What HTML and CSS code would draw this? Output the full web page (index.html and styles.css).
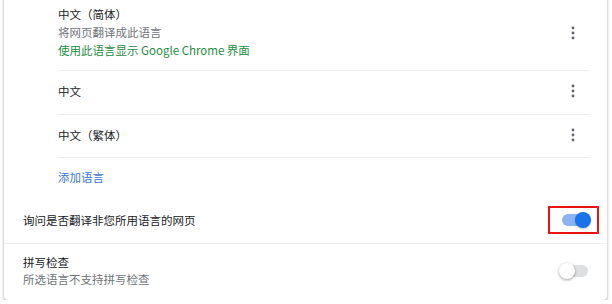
FILE: index.html
```html
<!DOCTYPE html>
<html>
<head>
    <meta charset="utf-8" />
    <title>语言</title>
    <link rel="stylesheet" href="styles.css">
</head>
<body>
    <div class="card">
        <div class="langList">
            <div class="langItem first">
                <div class="langText">
                    <div>中文（简体）</div>
                    <div class="sub">将网页翻译成此语言</div>
                    <div class="green">使用此语言显示 Google Chrome 界面</div>
                </div>
                <div class="more">
                    <svg width="12" height="16" viewBox="0 0 12 16"><circle cx="6" cy="3" r="1.4"/><circle cx="6" cy="8" r="1.4"/><circle cx="6" cy="13" r="1.4"/></svg>
                </div>
            </div>
            <div class="langItem">
                <div class="langText">中文</div>
                <div class="more">
                    <svg width="12" height="16" viewBox="0 0 12 16"><circle cx="6" cy="3" r="1.4"/><circle cx="6" cy="8" r="1.4"/><circle cx="6" cy="13" r="1.4"/></svg>
                </div>
            </div>
            <div class="langItem">
                <div class="langText">中文（繁体）</div>
                <div class="more">
                    <svg width="12" height="16" viewBox="0 0 12 16"><circle cx="6" cy="3" r="1.4"/><circle cx="6" cy="8" r="1.4"/><circle cx="6" cy="13" r="1.4"/></svg>
                </div>
            </div>
            <div class="addLang">添加语言</div>
        </div>
        <div class="row">
            <div>询问是否翻译非您所用语言的网页</div>
            <div class="toggle on">
                <span class="bar"></span>
                <span class="knob"></span>
                <span class="mark"></span>
            </div>
        </div>
        <div class="row spell">
            <div>
                <div>拼写检查</div>
                <div class="sub">所选语言不支持拼写检查</div>
            </div>
            <div class="toggle">
                <span class="bar"></span>
                <span class="knob"></span>
            </div>
        </div>
    </div>
</body>
</html>
```

FILE: styles.css
```css
body{
    margin: 0;
    background: #fff;
    font-family: "Noto Sans CJK SC", "Liberation Sans", sans-serif;
    font-size: 11.5px;
    color: #202124;
}
.card{
    margin: -4px 5px 0 4px;
    background: #fff;
    border-radius: 0 0 4px 4px;
    box-shadow: 0 1px 2px rgba(60,64,67,.3), 0 1px 3px 1px rgba(60,64,67,.15);
}
.langList{
    padding: 0 18px 0 54px;
}
.langItem{
    display: flex;
    justify-content: space-between;
    align-items: center;
    box-sizing: border-box;
    height: 43px;
    padding-bottom: 3px;
    border-bottom: 1px solid #eceef0;
}
.langItem.first{
    height: auto;
    padding: 9px 0 10px;
}
.langItem:nth-child(3){
    height: 43px;
}
.langItem:nth-child(2){
    height: 44px;
}
.langText{
    line-height: 18px;
}
.first .langText div:nth-child(3){
    line-height: 19px;
}
.sub{
    color: #6f7378;
}
.green{
    color: #1e8e3e;
}
.more{
    width: 20px;
    margin-right: 6px;
    text-align: center;
    line-height: 0;
}
.more svg{
    fill: #5f6368;
}
.addLang{
    height: 38px;
    padding-bottom: 3px;
    line-height: 38px;
    color: #3a76d8;
}
.row{
    display: flex;
    justify-content: space-between;
    align-items: center;
    box-sizing: border-box;
    height: 44px;
    padding: 0 19px 3px 19px;
}
.row.spell{
    height: 57px;
    padding-bottom: 3px;
    border-top: 1px solid #eceef0;
    line-height: 17px;
}
.toggle{
    position: relative;
    width: 26px;
    height: 12px;
}
.toggle .bar{
    display: block;
    width: 26px;
    height: 12px;
    border-radius: 6px;
    background: #dedfe1;
}
.toggle .knob{
    position: absolute;
    top: -2px;
    left: -3px;
    width: 16px;
    height: 16px;
    border-radius: 50%;
    background: #fff;
    box-shadow: 0 1px 3px rgba(0,0,0,.4);
}
.toggle.on .bar{
    background: #8bb3f5;
}
.toggle.on .knob{
    left: 13px;
    background: #1a73e8;
    box-shadow: 0 1px 2px rgba(0,0,0,.25);
}
.mark{
    position: absolute;
    left: -14px;
    top: -8px;
    width: 47px;
    height: 24px;
    border: 2px solid #ee1111;
}
```
